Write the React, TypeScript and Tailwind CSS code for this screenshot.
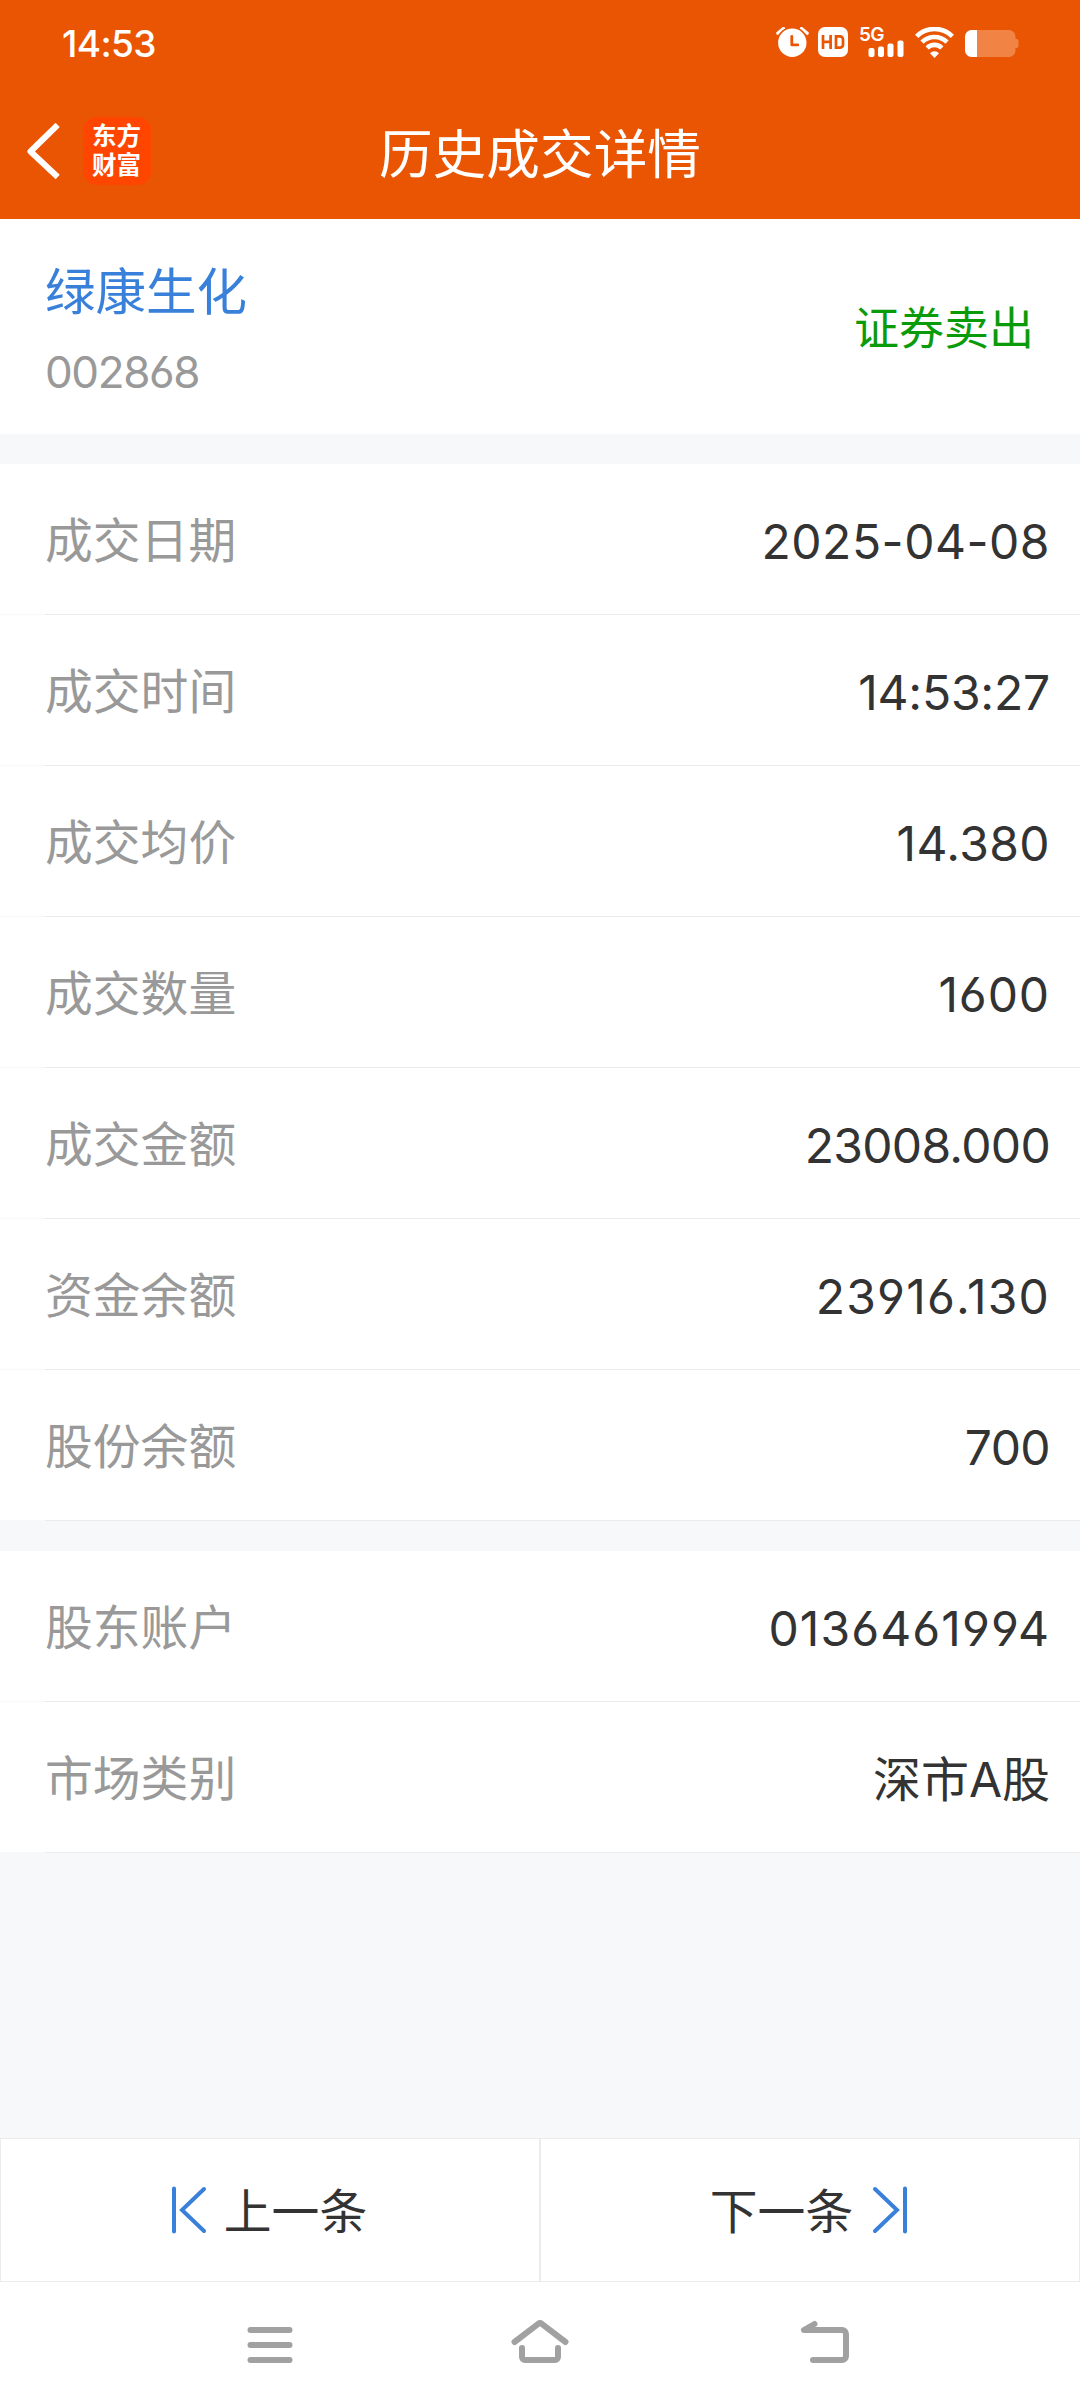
import type { ReactNode } from "react";

type Item = { label: string; value: string; tracking: string };

const trades: Item[] = [
  { label: "成交日期", value: "2025-04-08", tracking: "tracking-[0.5px]" },
  { label: "成交时间", value: "14:53:27", tracking: "tracking-[-0.2px]" },
  { label: "成交均价", value: "14.380", tracking: "tracking-[0.4px]" },
  { label: "成交数量", value: "1600", tracking: "tracking-[0.9px]" },
  { label: "成交金额", value: "23008.000", tracking: "tracking-[-0.7px]" },
  { label: "资金余额", value: "23916.130", tracking: "tracking-[1.2px]" },
  { label: "股份余额", value: "700", tracking: "tracking-[-0.6px]" },
];

const account: Item[] = [
  { label: "股东账户", value: "0136461994", tracking: "tracking-[1.1px]" },
  { label: "市场类别", value: "深市A股", tracking: "tracking-normal" },
];

function Row({ label, value, tracking }: Item) {
  return (
    <div className="flex h-[151px] flex-col bg-white">
      <div className="flex flex-1 items-center justify-between pl-[45px] pr-[30px] pt-[5px]">
        <span className="pb-[2px] text-[47.8px] leading-[60px] text-[#999999]">{label}</span>
        <span className={`text-[48px] leading-[60px] text-[#333333] ${tracking}`}>{value}</span>
      </div>
      <div className="h-px bg-[#f8f8f8] pl-[45px]">
        <div className="h-px bg-[#ebebeb]" />
      </div>
    </div>
  );
}

function Section({ items }: { items: Item[] }) {
  return (
    <section>
      {items.map((item) => (
        <Row key={item.label} {...item} />
      ))}
    </section>
  );
}

function StatusBar() {
  return (
    <div className="flex h-[84px] items-center justify-between pl-[62px] pr-[61px] text-white">
      <span className="pt-[3px] text-[37px] font-medium leading-none tracking-[-0.6px]">14:53</span>
      <div className="flex items-center">
        <svg className="h-[30px] w-[33px]" viewBox="0 0 33 30" fill="none">
          <path d="M1.8 6.300 7.500 1.600M25.500 1.600l5.700 4.700" stroke="white" strokeWidth="3.200" strokeLinecap="round" />
          <circle cx="16.300" cy="15.700" r="15" fill="white" stroke="#ea5504" strokeWidth="1.600" />
          <path d="M15.800 9.500v8.400h6" stroke="#ea5504" strokeWidth="2.800" strokeLinecap="round" strokeLinejoin="round" />
        </svg>
        <svg className="ml-[9px] h-[30px] w-[30px]" viewBox="0 0 30 30" fill="none">
          <rect width="30" height="30" rx="7" fill="white" />
          <path d="M5 8v14M12.600 8v14M5 14.800h7.600M18 9.300v11.400h4a3 3 0 0 0 3-3v-5.400a3 3 0 0 0-3-3z" stroke="#ea5504" strokeWidth="2.700" />
        </svg>
        <div className="relative ml-[11px] h-[30px] w-[46px]">
          <span className="absolute -top-[2px] left-0 text-[19px] font-semibold leading-[20px] tracking-[-0.8px]">5G</span>
          <svg className="absolute inset-0 h-[30px] w-[46px]" viewBox="0 0 46 30" fill="white">
            <rect x="9.500" y="21" width="6" height="9" rx="2" />
            <rect x="19" y="19.500" width="6" height="10.500" rx="2" />
            <rect x="28.500" y="16.500" width="6" height="13.500" rx="2" />
            <rect x="38.500" y="13.500" width="6" height="16.500" rx="2" />
          </svg>
        </div>
        <svg className="ml-[10px] h-[31px] w-[39px]" viewBox="0 0 39 31" fill="none" stroke="white" strokeWidth="4.600">
          <path d="M1.700 9.300a25.200 25.200 0 0 1 35.600 0" />
          <path d="M7 15.200a17.600 17.600 0 0 1 25 0" />
          <path d="M12.200 21a10.200 10.200 0 0 1 14.600 0" />
          <path d="M15 26.200a6.300 6.300 0 0 1 9 0L19.500 31z" fill="white" stroke="none" />
        </svg>
        <svg className="ml-[11px] mt-[3px] h-[27px] w-[54px]" viewBox="0 0 54 27">
          <path d="M12 0h32a6.500 6.500 0 0 1 6.500 6.500v2.500h1a2 2 0 0 1 2 2v5a2 2 0 0 1-2 2h-1v2.500a6.500 6.500 0 0 1-6.500 6.500H12z" fill="#f18345" />
          <path d="M12 0H6.500A6.500 6.500 0 0 0 0 6.500v14A6.500 6.500 0 0 0 6.500 27H12z" fill="white" />
        </svg>
      </div>
    </div>
  );
}

function TitleBar() {
  return (
    <div className="relative flex h-[135px] items-center pb-[1px] pl-[26px] text-white">
      <svg className="h-[56px] w-[34px]" viewBox="0 0 34 56" fill="none">
        <path d="M29.500 4 4.500 28.500 29.500 52" stroke="white" strokeWidth="6" strokeLinecap="square" strokeLinejoin="round" />
      </svg>
      <div className="ml-[23px] flex h-[68px] w-[68px] flex-col items-start rounded-[14px] bg-[#ff4600] pl-[9px] pt-[5px] text-[24.5px] font-bold leading-[29px]">
        <span>东方</span>
        <span>财富</span>
      </div>
      <h1 className="absolute inset-x-0 top-[36px] text-center text-[53.7px] font-normal leading-[70px]">历史成交详情</h1>
    </div>
  );
}

function FooterButton({ children }: { children: ReactNode }) {
  return (
    <button className="flex flex-1 items-center justify-center border border-[#ebebeb] pr-[2px] text-[47.8px] leading-[60px] text-[#333333]">
      {children}
    </button>
  );
}

function SystemNav() {
  return (
    <nav className="flex h-[126px] bg-white pl-[240px] text-[#a1a1a1]">
      <svg className="h-[126px] w-[60px]" viewBox="0 0 60 126" fill="none" stroke="currentColor" strokeWidth="6" strokeLinecap="round">
        <path d="M10.500 48h39M10.500 63h39M10.500 78h39" />
      </svg>
      <svg className="ml-[210px] h-[126px] w-[60px]" viewBox="0 0 60 126" fill="none" stroke="currentColor" strokeWidth="6" strokeLinecap="round" strokeLinejoin="round">
        <path d="M4.500 60 28.200 41.800a3 3 0 0 1 3.600 0L55.500 60M12 66v9a3 3 0 0 0 3 3h30a3 3 0 0 0 3-3v-9" />
      </svg>
      <svg className="ml-[225px] h-[126px] w-[60px]" viewBox="0 0 60 126" fill="none" stroke="currentColor" strokeWidth="6" strokeLinecap="round" strokeLinejoin="round">
        <path d="M19.500 42 9 48h38a4 4 0 0 1 4 4v22a4 4 0 0 1-4 4H18" />
      </svg>
    </nav>
  );
}

export default function App() {
  return (
    <div className="flex h-[2408px] w-[1080px] flex-col overflow-hidden bg-[#f6f8fa] font-['Inter','Noto_Sans_CJK_SC',sans-serif] [font-feature-settings:'cv03','cv04']">
      <header className="h-[219px] bg-[#ea5504]">
        <StatusBar />
        <TitleBar />
      </header>

      <section className="flex h-[215px] items-center justify-between bg-white pl-[45px] pr-[46px]">
        <div className="flex flex-col pt-[6px]">
          <span className="text-[50.5px] leading-[70px] text-[#3880da]">绿康生化</span>
          <span className="mt-[15px] text-[44px] leading-[60px] tracking-[-1.4px] text-[#999999]">002868</span>
        </div>
        <span className="pt-[5px] text-[45px] leading-[60px] text-[#0a9b0a]">证券卖出</span>
      </section>

      <main className="mt-[30px] flex flex-col gap-[30px]">
        <Section items={trades} />
        <Section items={account} />
      </main>

      <footer className="mt-auto">
        <div className="flex h-[144px] bg-white">
          <FooterButton>
            <svg className="mr-[17px] h-[48px] w-[36px]" viewBox="0 0 36 48" fill="none" stroke="#3880da" strokeWidth="4" strokeLinecap="round">
              <path d="M3 2.500v43M33 3 11 24l22 21" />
            </svg>
            <span className="pt-[3px]">上一条</span>
          </FooterButton>
          <FooterButton>
            <span className="pt-[3px]">下一条</span>
            <svg className="ml-[19px] h-[48px] w-[36px]" viewBox="0 0 36 48" fill="none" stroke="#3880da" strokeWidth="4" strokeLinecap="round">
              <path d="M33 2.500v43M3 3l22 21L3 45" />
            </svg>
          </FooterButton>
        </div>
        <SystemNav />
      </footer>
    </div>
  );
}
